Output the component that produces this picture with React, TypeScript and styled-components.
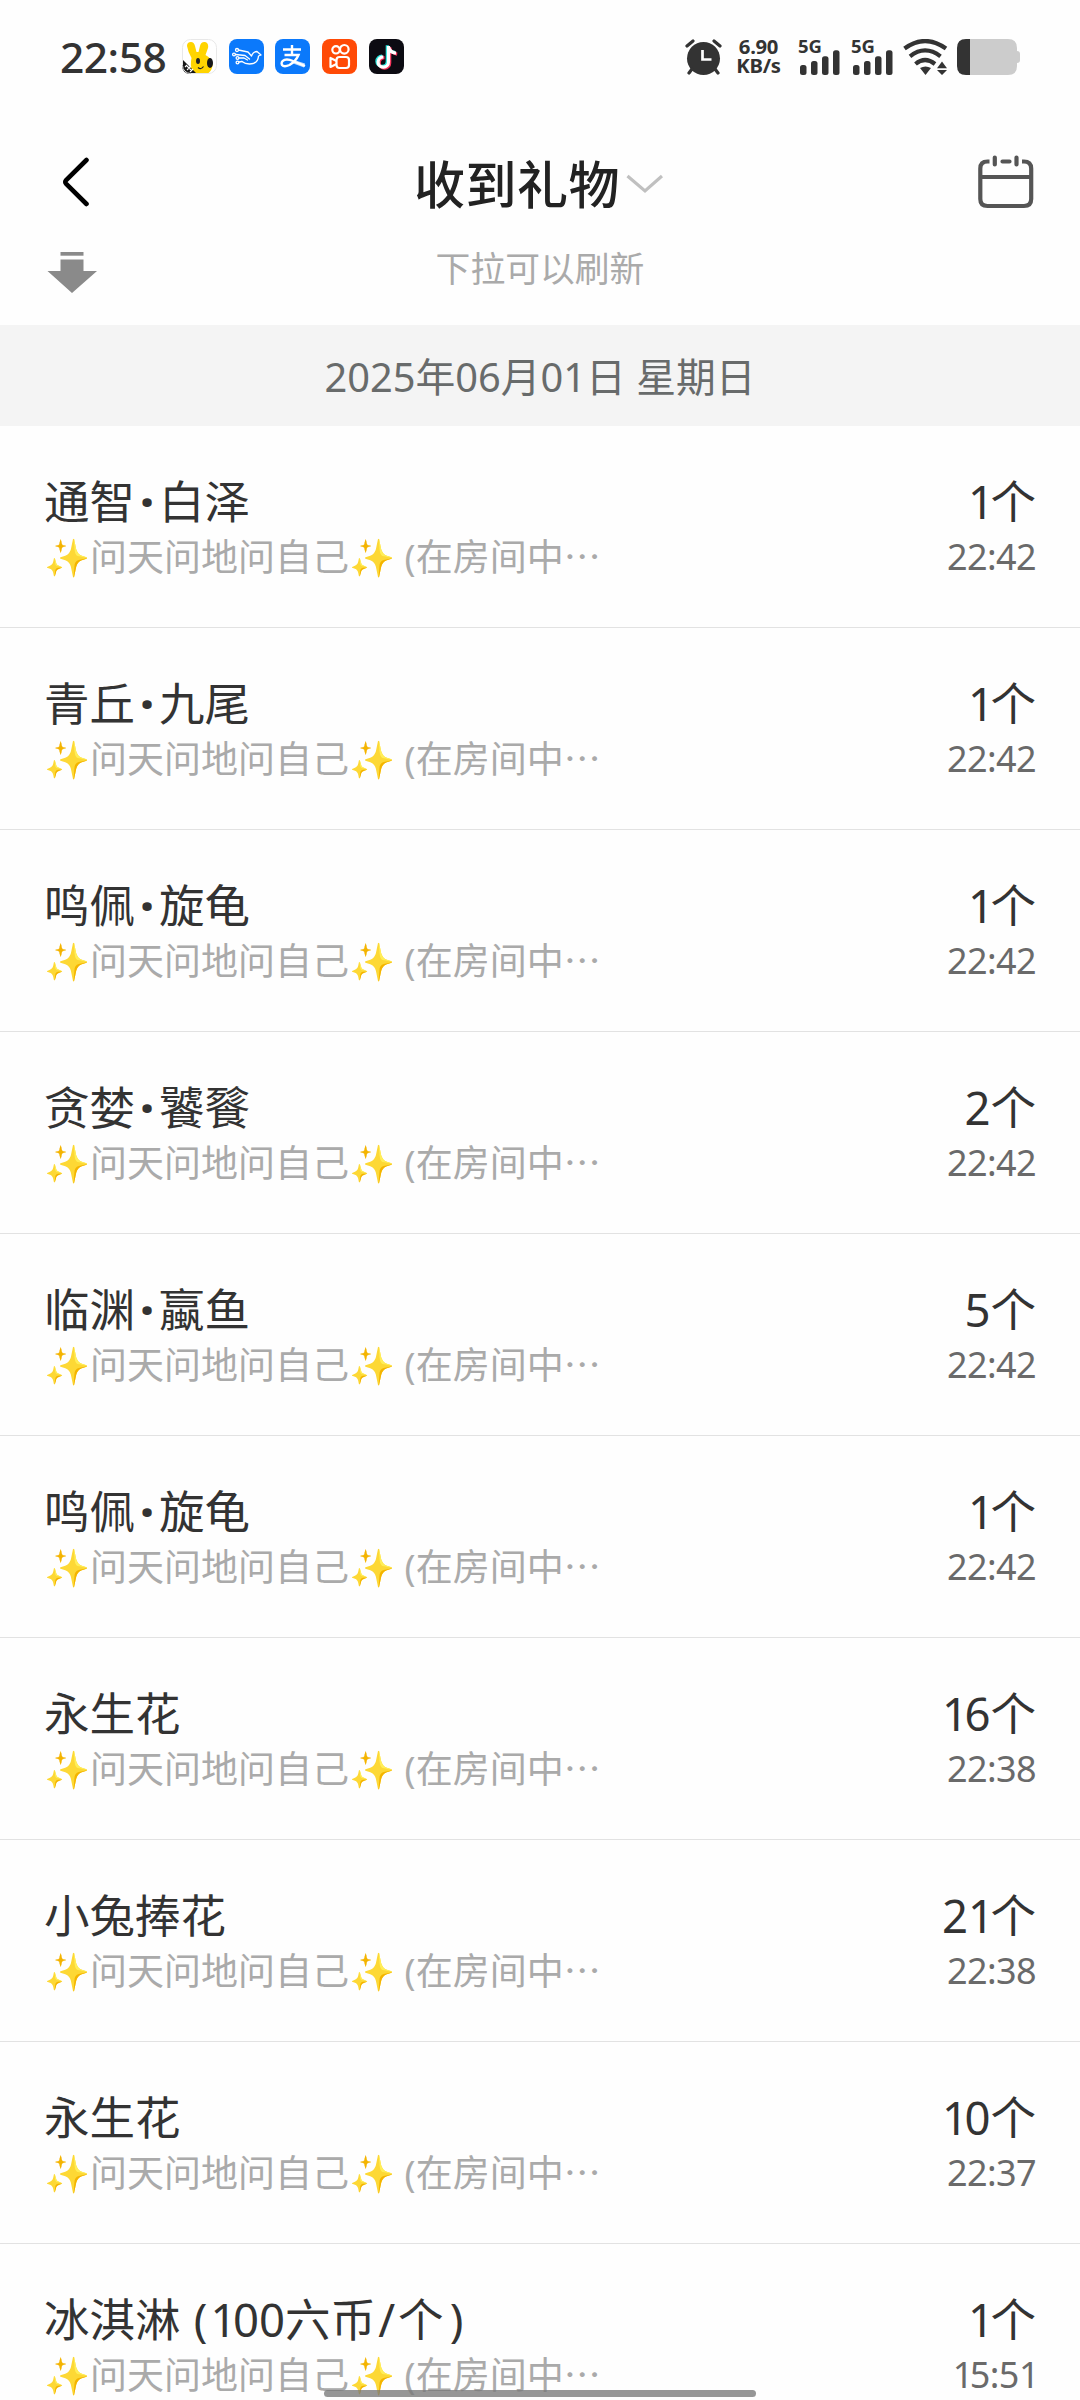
import React from "react";
import styled, { createGlobalStyle } from "styled-components";

const GlobalStyle = createGlobalStyle`
  * { box-sizing: border-box; }
  html, body { margin: 0; padding: 0; background: #fff; }
  body { font-family: "Noto Sans", "Noto Sans CJK SC", sans-serif; overflow: hidden; }
  svg { display: block; flex: none; }
`;

const Screen = styled.div`
  position: relative;
  width: 1080px;
  height: 2400px;
  overflow: hidden;
  background: #fefefe;
  display: flex;
  flex-direction: column;
`;

const StatusBar = styled.header`
  display: flex;
  align-items: flex-start;
  justify-content: space-between;
  height: 132px;
  flex: none;
  padding: 39px 60px 0 60px;
  color: #333;
`;

const StatusGroup = styled.div`
  display: flex;
  align-items: flex-start;
`;

const Clock = styled.span`
  width: 122px;
  font-size: 42.5px;
  font-weight: 550;
  line-height: 36px;
  letter-spacing: -0.5px;
  white-space: nowrap;
`;

const AppIcons = styled.div`
  display: flex;
  gap: 11.7px;
`;

const NetSpeed = styled.div`
  width: 45px;
  height: 36px;
  margin: -2px 0 0 14px;
  font-size: 20.3px;
  font-weight: 700;
  line-height: 19px;
  letter-spacing: -0.3px;
  text-align: center;
  white-space: pre;
`;

const Signal = styled.div<{ $gap: number }>`
  display: grid;
  width: 42px;
  height: 36px;
  margin-left: ${(p) => p.$gap}px;
  > * { grid-area: 1 / 1; }
`;

const SignalLabel = styled.span`
  font-size: 18.5px;
  font-weight: 700;
  line-height: 14px;
`;

const NavBar = styled.nav`
  display: grid;
  grid-template-columns: 100px 1fr 100px;
  align-items: center;
  height: 104px;
  flex: none;
  padding: 0 46px 0 60px;
`;

const IconButton = styled.button<{ $end?: boolean }>`
  display: flex;
  justify-content: ${(p) => (p.$end ? "flex-end" : "flex-start")};
  margin: 0 0 5px;
  padding: 0;
  border: 0;
  background: none;
`;

const Title = styled.h1`
  display: flex;
  align-items: center;
  justify-content: center;
  margin: 0 17px 0 0;
  color: #222;
  font-size: 51px;
  font-weight: 500;
  line-height: 104px;
  letter-spacing: 0.5px;
  gap: 6px;
`;

const PullHint = styled.div`
  display: grid;
  grid-template-columns: 60px 1fr 60px;
  align-items: center;
  height: 89px;
  flex: none;
  padding: 0 47px 24px;
  color: #aaa;
  font-size: 34.8px;
  line-height: 65px;
  text-align: center;
`;

const ArrowSlot = styled.div`
  padding-top: 7px;
`;

const DateBand = styled.div`
  height: 101px;
  flex: none;
  padding-top: 3px;
  background: #f4f4f4;
  color: #686b6b;
  font-size: 39.8px;
  line-height: 98px;
  text-align: center;
`;

const List = styled.ul`
  margin: 0;
  padding: 0;
  list-style: none;
`;

const Row = styled.li`
  display: flex;
  justify-content: space-between;
  height: 202px;
  padding: 45px 44px 0;
  border-bottom: 1px solid #e2e2e2;
  white-space: nowrap;
`;

const Column = styled.div<{ $end?: boolean }>`
  display: flex;
  flex-direction: column;
  align-items: ${(p) => (p.$end ? "flex-end" : "flex-start")};
`;

const Primary = styled.span`
  color: #333;
  font-size: 45.5px;
  line-height: 61px;
`;

const Sender = styled.span`
  color: #aaa;
  font-size: 37px;
  line-height: 49px;
`;

const Ellipsis = styled.span`
  font-family: "Noto Sans CJK SC", sans-serif;
  line-height: 1;
`;

const Time = styled.time`
  color: #6a6a6a;
  font-size: 36px;
  line-height: 49px;
  letter-spacing: -0.6px;
`;

const Glyph = styled.span<{ $before: number; $after: number; $bold?: boolean }>`
  margin-left: ${(p) => p.$before}em;
  margin-right: ${(p) => p.$after}em;
  font-weight: ${(p) => (p.$bold ? 900 : "inherit")};
`;

const HomeIndicator = styled.div`
  position: absolute;
  left: 324px;
  bottom: 3px;
  width: 432px;
  height: 7px;
  border-radius: 4px;
  background: rgba(120, 120, 120, 0.78);
`;

const RabbitIcon = () => (
  <svg width="35" height="35" viewBox="0 0 35 35">
    <defs>
      <clipPath id="rabbit"><rect width="35" height="35" rx="8" /></clipPath>
    </defs>
    <g clipPath="url(#rabbit)">
      <rect width="35" height="35" fill="#fff" />
      <path d="M5 7Q5 3 9 3Q12 3 13 7L14.500 13H16.500L18 7Q19 2.500 23 3Q27 4 26 9L23.500 16Q31 20 30.500 27Q29 35 21 36H10Q8 26 9.500 19Q6 13 5 7Z" fill="#ffd400" />
      <ellipse cx="16" cy="22" rx="2" ry="3" fill="#222" />
      <ellipse cx="28" cy="24" rx="3" ry="5" fill="#181818" />
      <path d="M16 28.500Q19 31 21.500 27.500" fill="none" stroke="#222" strokeWidth="1.2" />
      <path d="M0 20L15 35H0Z" fill="#161616" />
      <path d="M3 28l2-2M5 31l4-4M8 33l3-3M5 27l5 5" stroke="#fff" strokeWidth="1.1" />
    </g>
    <rect x=".5" y=".5" width="34" height="34" rx="8" fill="none" stroke="#e8e8e8" />
  </svg>
);

const BirdIcon = () => (
  <svg width="35" height="35" viewBox="0 0 35 35">
    <rect width="35" height="35" rx="8" fill="#0b79fb" />
    <g fill="none" stroke="#fff" strokeWidth="1.3" strokeLinecap="round" strokeLinejoin="round">
      <path d="M9.500 11L19 13L22.500 17Q24 12.500 28 12.500L32 16L29.500 17Q29 25 20.500 25Q16 25 13 22.500" />
      <path d="M6.500 15.500L16 16.500L20.500 20M10 19H15L18.500 21M10 23L13 22.500" />
      <circle cx="8" cy="11" r="1.500" />
      <circle cx="5" cy="15.500" r="1.400" />
      <circle cx="8.500" cy="19" r="1.400" />
      <circle cx="8.500" cy="23.500" r="1.400" />
    </g>
  </svg>
);

const AlipayIcon = () => (
  <svg width="35" height="35" viewBox="0 0 35 35">
    <rect width="35" height="35" rx="8" fill="#0b79fb" />
    <g fill="none" stroke="#fff" strokeLinecap="butt">
      <path d="M8 10.500H26M17 6V16" strokeWidth="2.400" />
      <path d="M9.500 16H23.500Q21 22 14.500 26Q9 28.500 7 26Q5.500 22.500 9.500 20.800Q13 19.700 18 22L30 27" strokeWidth="2.400" />
    </g>
    <path d="M19 21L30 24.500L29 28.500L17 24Z" fill="#fff" opacity=".75" />
  </svg>
);

const KuaishouIcon = () => (
  <svg width="35" height="35" viewBox="0 0 35 35">
    <rect width="35" height="35" rx="8" fill="#ff4a06" />
    <g fill="none" stroke="#fff" strokeWidth="2.2" strokeLinejoin="round">
      <circle cx="14" cy="10.8" r="3.7" />
      <circle cx="22.3" cy="10.3" r="4.3" />
      <rect x="14.500" y="18" width="12.500" height="11" rx="3" />
      <path d="M14.500 22L8.500 19V28L14.500 25" />
    </g>
  </svg>
);

const DouyinIcon = () => {
  const note = "M19.500 7V23A5.200 5.200 0 1 1 14.300 17.800M19.500 8Q21 13.500 27 14.200";
  return (
    <svg width="35" height="35" viewBox="0 0 35 35">
      <rect width="35" height="35" rx="8" fill="#0c0b12" />
      <g fill="none" strokeWidth="3.2">
        <path d={note} stroke="#25e4dc" transform="translate(-1.2 -.8)" />
        <path d={note} stroke="#f9345c" transform="translate(1.2 .9)" />
        <path d={note} stroke="#fff" />
      </g>
    </svg>
  );
};

const AlarmIcon = () => (
  <svg width="37" height="36" viewBox="0 0 37 36">
    <circle cx="18.500" cy="19.500" r="16.500" fill="#333" />
    <g stroke="#333" strokeWidth="3.200" strokeLinecap="round">
      <path d="M2 7L8 2M29 2L35 7M7 30L4 34M30 30L33 34" />
    </g>
    <path d="M17.500 11V20.500H26.500" fill="none" stroke="#fff" strokeWidth="2.700" />
  </svg>
);

const SignalBars = () => (
  <svg width="42" height="36" viewBox="0 0 42 36" fill="#333">
    <rect x="2" y="26" width="6.500" height="10" rx="2.500" />
    <rect x="13" y="22" width="6.500" height="14" rx="2.500" />
    <rect x="24" y="17.300" width="6.500" height="18.700" rx="2.500" />
    <rect x="35" y="11.300" width="6.500" height="24.700" rx="2.500" />
  </svg>
);

const WifiIcon = () => (
  <svg width="45" height="36" viewBox="0 0 45 36">
    <g fill="none" stroke="#333" strokeWidth="4.200">
      <path d="M1.500 9.500Q22 -5.500 43 9.500" />
      <path d="M7 17.300Q22 5.500 37.500 17.300" />
      <path d="M12.500 25Q22 17 32 25" />
    </g>
    <path d="M17 29Q22.500 26 28 29L22.500 36Z" fill="#333" />
    <path d="M34 29.300L39 22.500L44 29.300ZM34 31H44L39 36Z" fill="#333" />
  </svg>
);

const BatteryIcon = () => (
  <svg width="63" height="36" viewBox="0 0 63 36">
    <path d="M13 0H51Q60 0 60 9V12Q63 12 63 15V21Q63 24 60 24V27Q60 36 51 36H13Z" fill="#ccc" />
    <path d="M13 0H9Q0 0 0 9V27Q0 36 9 36H13Z" fill="#333" />
  </svg>
);

const IconSlot = styled.div<{ $gap: number }>`
  margin-left: ${(p) => p.$gap}px;
`;

const BackIcon = () => (
  <svg width="30" height="50" viewBox="0 0 30 50">
    <path d="M26.500 3L6.200 23Q4.500 25 6.200 26.800L26.500 47" fill="none" stroke="#000" strokeWidth="4.600" strokeLinecap="round" />
  </svg>
);

const ChevronIcon = () => (
  <svg width="37" height="20" viewBox="0 0 37 20">
    <path d="M1.500 2L19 17L36 2" fill="none" stroke="#c0c0c0" strokeWidth="3.200" />
  </svg>
);

const CalendarIcon = () => (
  <svg width="56" height="54" viewBox="0 0 56 54">
    <g fill="none" stroke="#555" strokeWidth="4.200">
      <path d="M11.500 6.500H9.500Q2.300 6.500 2.300 13.500V44Q2.300 51 9.500 51H46Q53.200 51 53.200 44V13.500Q53.200 6.500 46 6.500H44" />
      <path d="M2.300 22H53.200" strokeWidth="3.800" />
      <path d="M16.800 2.500V9.500M38.500 2.500V9.500M24.500 6.500H31.500" strokeLinecap="round" />
    </g>
  </svg>
);

const PullArrow = () => (
  <svg width="50" height="41" viewBox="0 0 50 41" fill="#8a8a8a">
    <rect x="13.500" width="23" height="3.700" />
    <path d="M13.500 7.500H36.500V19H50L25 41L.5 19H13.500Z" />
  </svg>
);

/* Side bearings, in em, of the glyphs that are set looser or tighter than the rest. */
const bearings: Record<string, [number, number]> = {
  "·": [0.12, 0.12],
  "(": [0.03, 0.07],
  ")": [0.14, 0],
  "/": [0.05, 0.06],
  "1": [0, -0.08],
};

const Spaced = ({ text }: { text: string }) => (
  <>
    {text.split(/([·()/1])/).map((part, index) => {
      const bearing = bearings[part];
      return bearing ? (
        <Glyph key={index} $before={bearing[0]} $after={bearing[1]} $bold={part === "·"}>
          {part}
        </Glyph>
      ) : (
        part
      );
    })}
  </>
);

const gifts = [
  { name: "通智·白泽", count: "1个", time: "22:42" },
  { name: "青丘·九尾", count: "1个", time: "22:42" },
  { name: "鸣佩·旋龟", count: "1个", time: "22:42" },
  { name: "贪婪·饕餮", count: "2个", time: "22:42" },
  { name: "临渊·蠃鱼", count: "5个", time: "22:42" },
  { name: "鸣佩·旋龟", count: "1个", time: "22:42" },
  { name: "永生花", count: "16个", time: "22:38" },
  { name: "小兔捧花", count: "21个", time: "22:38" },
  { name: "永生花", count: "10个", time: "22:37" },
  { name: "冰淇淋 (100六币/个)", count: "1个", time: "15:51" },
];

export default function App() {
  return (
    <>
      <GlobalStyle />
      <Screen lang="zh-CN">
        <StatusBar>
          <StatusGroup>
            <Clock>22:58</Clock>
            <AppIcons>
              <RabbitIcon />
              <BirdIcon />
              <AlipayIcon />
              <KuaishouIcon />
              <DouyinIcon />
            </AppIcons>
          </StatusGroup>
          <StatusGroup>
            <AlarmIcon />
            <NetSpeed>{"6.90\nKB/s"}</NetSpeed>
            <Signal $gap={17}>
              <SignalLabel>5G</SignalLabel>
              <SignalBars />
            </Signal>
            <Signal $gap={11}>
              <SignalLabel>5G</SignalLabel>
              <SignalBars />
            </Signal>
            <IconSlot $gap={10}><WifiIcon /></IconSlot>
            <IconSlot $gap={9}><BatteryIcon /></IconSlot>
          </StatusGroup>
        </StatusBar>
        <NavBar>
          <IconButton aria-label="返回"><BackIcon /></IconButton>
          <Title>
            收到礼物
            <ChevronIcon />
          </Title>
          <IconButton $end aria-label="日历"><CalendarIcon /></IconButton>
        </NavBar>
        <PullHint>
          <ArrowSlot><PullArrow /></ArrowSlot>
          <span>下拉可以刷新</span>
        </PullHint>
        <DateBand>2025年06月01日 星期日</DateBand>
        <List>
          {gifts.map((gift, index) => (
            <Row key={index}>
              <Column>
                <Primary><Spaced text={gift.name} /></Primary>
                <Sender>
                  ✨问天问地问自己✨ (在房间中<Ellipsis>…</Ellipsis>
                </Sender>
              </Column>
              <Column $end>
                <Primary><Spaced text={gift.count} /></Primary>
                <Time><Spaced text={gift.time} /></Time>
              </Column>
            </Row>
          ))}
        </List>
        <HomeIndicator />
      </Screen>
    </>
  );
}
